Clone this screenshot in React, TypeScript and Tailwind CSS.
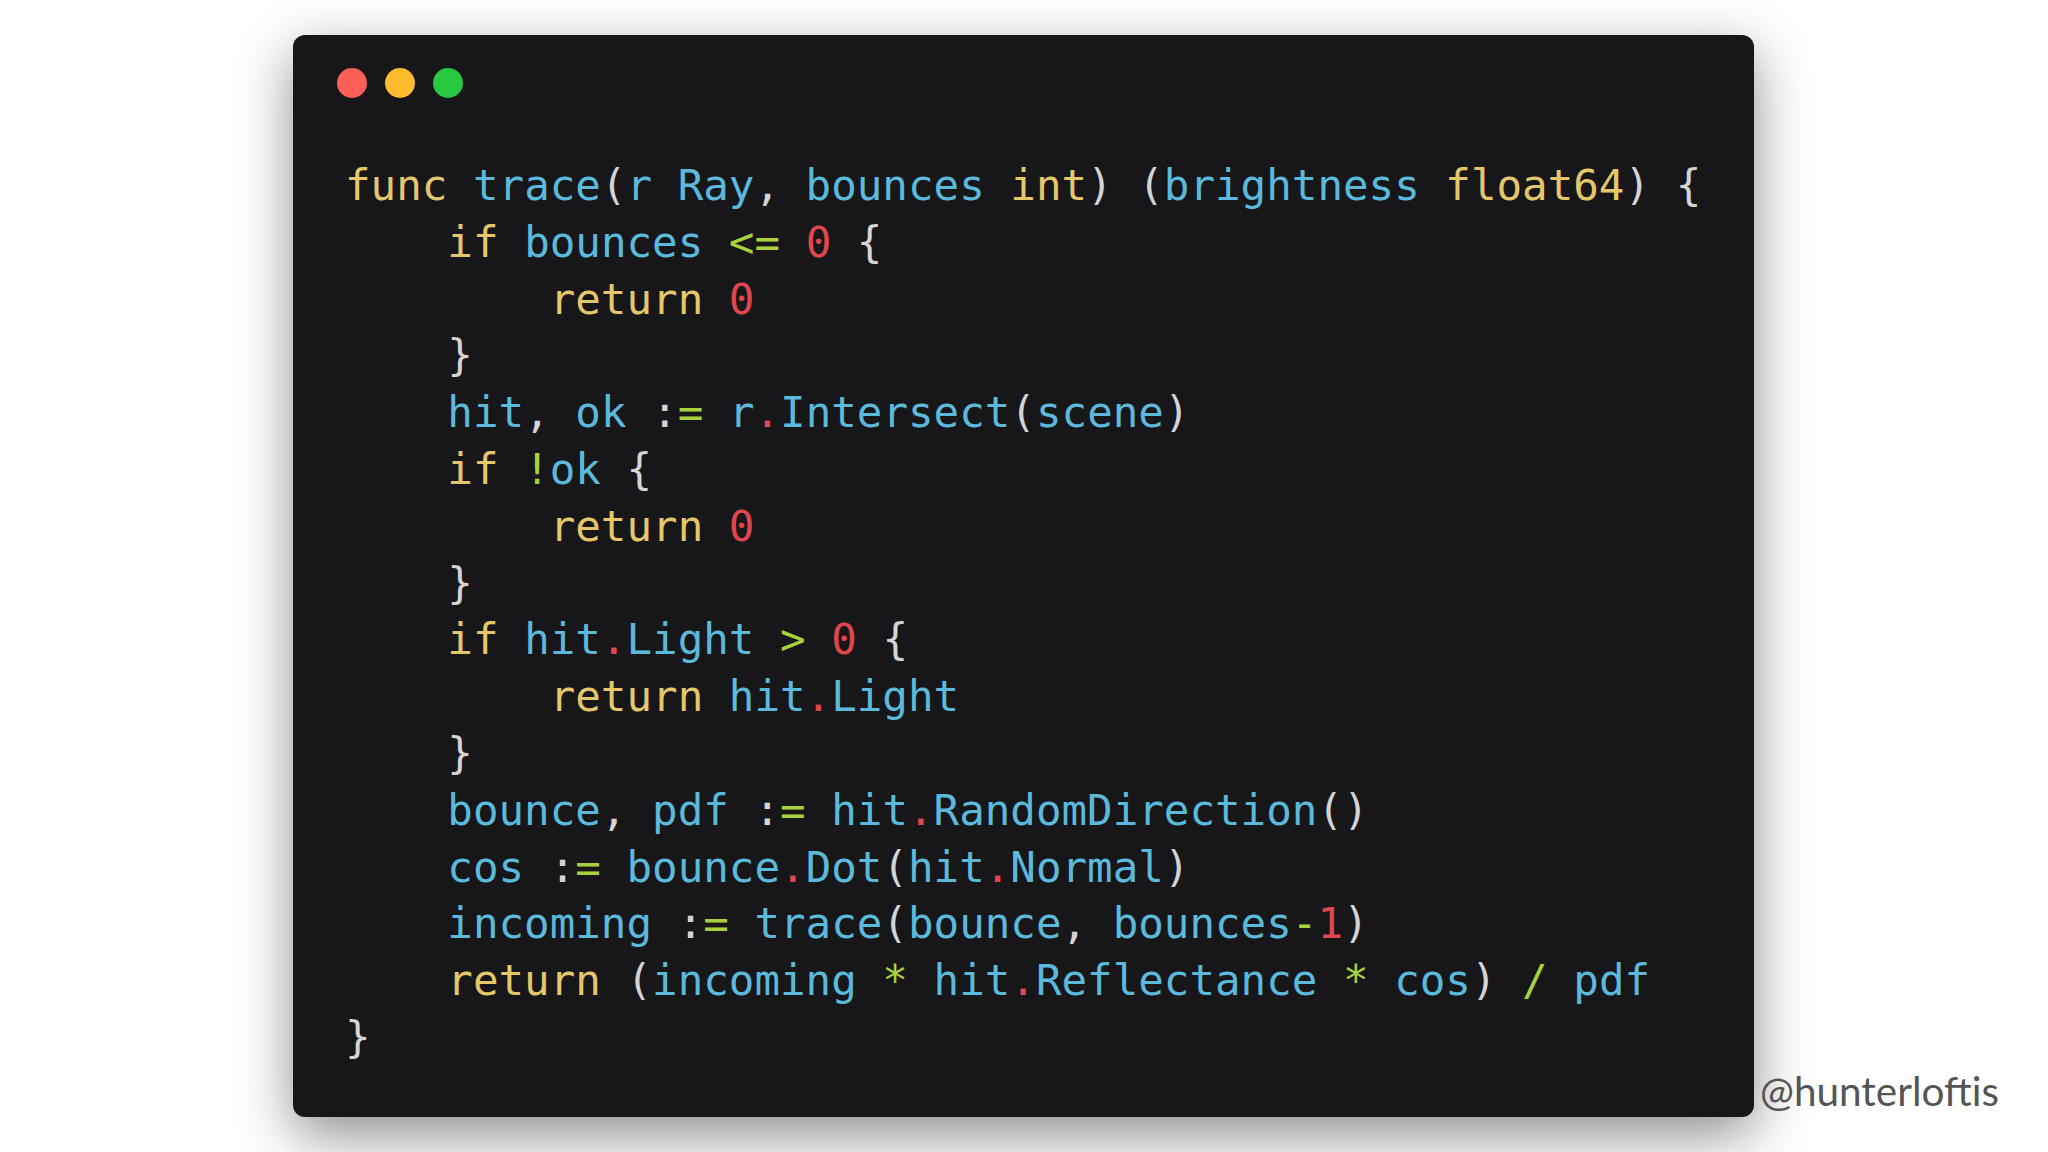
type Tok = [string, keyof typeof tone];

const tone = {
  k: "text-[#e5c76b]",
  i: "text-[#5bb9dc]",
  n: "text-[#e0474c]",
  o: "text-[#a7d13f]",
  p: "text-[#d4d4d4]",
};

// one entry per source line, split in coloured tokens
const lines: Tok[][] = [
  [["func", "k"], [" ", "p"], ["trace", "i"], ["(", "p"], ["r Ray", "i"], [", ", "p"], ["bounces", "i"], [" ", "p"], ["int", "k"], [") (", "p"], ["brightness", "i"], [" ", "p"], ["float64", "k"], [") {", "p"]],
  [["    if", "k"], [" ", "p"], ["bounces", "i"], [" ", "p"], ["<=", "o"], [" ", "p"], ["0", "n"], [" {", "p"]],
  [["        return", "k"], [" ", "p"], ["0", "n"]],
  [["    }", "p"]],
  [["    hit", "i"], [", ", "p"], ["ok", "i"], [" :", "p"], ["=", "o"], [" ", "p"], ["r", "i"], [".", "n"], ["Intersect", "i"], ["(", "p"], ["scene", "i"], [")", "p"]],
  [["    if", "k"], [" ", "p"], ["!", "o"], ["ok", "i"], [" {", "p"]],
  [["        return", "k"], [" ", "p"], ["0", "n"]],
  [["    }", "p"]],
  [["    if", "k"], [" ", "p"], ["hit", "i"], [".", "n"], ["Light", "i"], [" ", "p"], [">", "o"], [" ", "p"], ["0", "n"], [" {", "p"]],
  [["        return", "k"], [" ", "p"], ["hit", "i"], [".", "n"], ["Light", "i"]],
  [["    }", "p"]],
  [["    bounce", "i"], [", ", "p"], ["pdf", "i"], [" :", "p"], ["=", "o"], [" ", "p"], ["hit", "i"], [".", "n"], ["RandomDirection", "i"], ["()", "p"]],
  [["    cos", "i"], [" :", "p"], ["=", "o"], [" ", "p"], ["bounce", "i"], [".", "n"], ["Dot", "i"], ["(", "p"], ["hit", "i"], [".", "n"], ["Normal", "i"], [")", "p"]],
  [["    incoming", "i"], [" :", "p"], ["=", "o"], [" ", "p"], ["trace", "i"], ["(", "p"], ["bounce", "i"], [", ", "p"], ["bounces", "i"], ["-", "o"], ["1", "n"], [")", "p"]],
  [["    return", "k"], [" (", "p"], ["incoming", "i"], [" ", "p"], ["*", "o"], [" ", "p"], ["hit", "i"], [".", "n"], ["Reflectance", "i"], [" ", "p"], ["*", "o"], [" ", "p"], ["cos", "i"], [") ", "p"], ["/", "o"], [" ", "p"], ["pdf", "i"]],
  [["}", "p"]],
];

function WindowDots() {
  return (
    <div className="flex items-center gap-[18px]">
      <span className="h-[30px] w-[30px] rounded-full bg-[#fe5f57]" />
      <span className="h-[30px] w-[30px] rounded-full bg-[#febc2e]" />
      <span className="h-[30px] w-[30px] rounded-full bg-[#28c840]" />
    </div>
  );
}

export default function App() {
  return (
    <div className="h-[1152px] w-[2048px] overflow-hidden bg-white pl-[293px] pt-[35px]">
      <div className="flex items-end">
        <div className="flex h-[1082px] w-[1461px] flex-col rounded-[12px] bg-[#17171a] pt-[33px] shadow-[0_18px_55px_rgba(0,0,0,0.45)]">
          <div className="pl-[44px]">
            <WindowDots />
          </div>
          <pre className="mt-[60px] pl-[52px] font-['DejaVu_Sans_Mono',monospace] text-[42.5px] leading-[56.8px]">
            {lines.map((line, li) => (
              <div key={li}>
                {line.map(([t, c], ti) => (
                  <span key={ti} className={tone[c]}>{t}</span>
                ))}
              </div>
            ))}
          </pre>
        </div>
        <div className="mb-[6px] ml-[6px] font-['Lato',sans-serif] text-[40.5px] leading-none text-[#555555]">
          @hunterloftis
        </div>
      </div>
    </div>
  );
}
